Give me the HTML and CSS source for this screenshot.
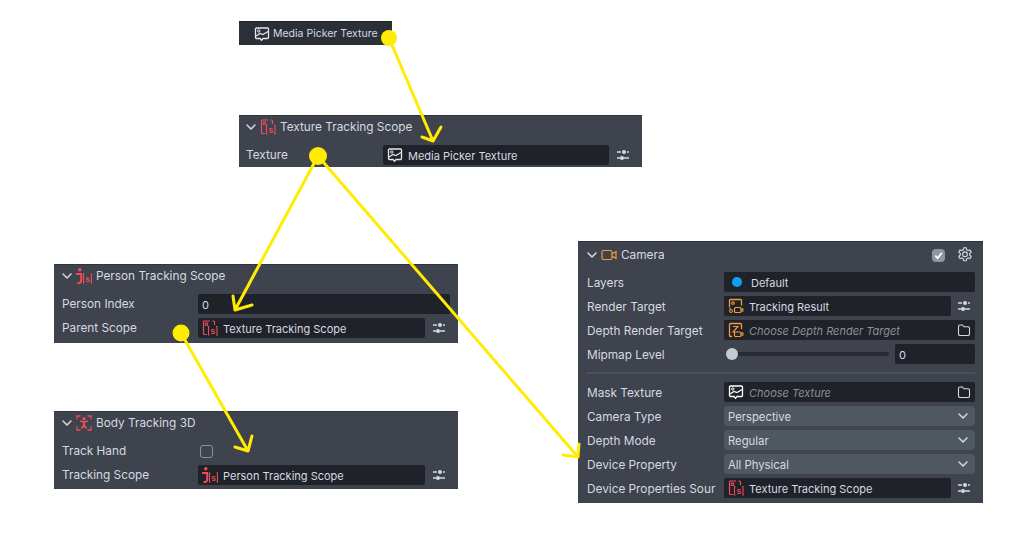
FILE: index.html
```html
<!DOCTYPE html>
<html lang="en">
<head>
  <meta charset="UTF-8">
  <title>Tracking Scope Setup</title>
  <link rel="stylesheet" href="styles.css">
</head>
<body>

  <svg class="defs" width="0" height="0">
    <symbol id="i-chevron" viewBox="0 0 12 12">
      <path d="M2 4l4 4 4-4" fill="none" stroke="currentColor" stroke-width="1.5" stroke-linecap="round" stroke-linejoin="round"/>
    </symbol>
    <symbol id="i-tune" viewBox="0 0 14 12">
      <path d="M1 3h4M11 3h2M1 9h3M8 9h5" stroke="currentColor" stroke-width="1.4" fill="none"/>
      <circle cx="8" cy="3" r="2" fill="currentColor"/>
      <circle cx="6" cy="9" r="2" fill="currentColor"/>
    </symbol>
    <symbol id="i-folder" viewBox="0 0 14 14">
      <path d="M1.500 3.500a1.500 1.500 0 0 1 1.500-1.500h2.500l1.500 1.800h4a1.500 1.500 0 0 1 1.500 1.500v5.700a1.500 1.500 0 0 1-1.500 1.500h-8a1.500 1.500 0 0 1-1.500-1.500z" fill="none" stroke="currentColor" stroke-width="1.100"/>
    </symbol>
    <symbol id="i-picture" viewBox="0 0 16 16">
      <path d="M2.500 2h11a1 1 0 0 1 1 1v8.500a1 1 0 0 1-1 1H9l-1.500 1.800L6 12.500H2.500a1 1 0 0 1-1-1V3a1 1 0 0 1 1-1z" fill="none" stroke="currentColor" stroke-width="1.300"/>
      <circle cx="4.800" cy="5" r="1.200" fill="none" stroke="currentColor"/>
      <path d="M2 10l4-2.500 3 1 5-3" fill="none" stroke="currentColor" stroke-width="1.200"/>
    </symbol>
    <symbol id="i-scope" viewBox="0 0 16 16">
      <path d="M8 1H2.500a1 1 0 0 0-1 1v11.500a1 1 0 0 0 1 1h2.500M10.500 1h1a1 1 0 0 1 1 1v3" fill="none" stroke="currentColor" stroke-width="1.200"/>
      <circle cx="4.500" cy="4.200" r="1.300" fill="none" stroke="currentColor" stroke-width="1.100"/>
      <path d="M7.500 6.500H6.500v8.500h1M14 6.500h1v8.500h-1" fill="none" stroke="currentColor" stroke-width="1.100"/>
      <text x="10.800" y="13.500" class="scope-s">s</text>
    </symbol>
    <symbol id="i-person-scope" viewBox="0 0 16 16">
      <circle cx="3.800" cy="1.800" r="1.700" fill="currentColor"/>
      <path d="M0 6h5.200v6.500c0 1.800-1.300 2.800-3.700 2.500" fill="none" stroke="currentColor" stroke-width="2"/>
      <path d="M8.500 6H7.500v9h1M14.500 6h1v9h-1" fill="none" stroke="currentColor" stroke-width="1.100"/>
      <text x="11.500" y="13.500" class="scope-s">s</text>
    </symbol>
    <symbol id="i-body" viewBox="0 0 16 16">
      <path d="M1 4.500V1h3.500M11.500 1H15v3.500M1 11.500V15h3.500M11.500 15H15v-3.500" fill="none" stroke="currentColor" stroke-width="1.300"/>
      <circle cx="8" cy="3.800" r="1.800" fill="currentColor"/>
      <path d="M4 6l4 1 4-1M8 7v3M8 10l-2.500 3.500M8 10l2.500 3.500" fill="none" stroke="currentColor" stroke-width="1.800"/>
    </symbol>
    <symbol id="i-camera" viewBox="0 0 16 12">
      <rect x="1" y="1.500" width="10" height="9" rx="1.500" fill="none" stroke="currentColor" stroke-width="1.200"/>
      <path d="M11 5l4-2.500v7L11 7" fill="none" stroke="currentColor" stroke-width="1.200"/>
    </symbol>
    <symbol id="i-target" viewBox="0 0 16 16">
      <path d="M1.500 9.500V2.500a1 1 0 0 1 1-1h10a1 1 0 0 1 1 1V7.500M3 11H1.500" fill="none" stroke="currentColor" stroke-width="1.300"/>
      <circle cx="5" cy="5" r="1.300" fill="none" stroke="currentColor" stroke-width="1.100"/>
      <rect x="6.500" y="9.500" width="6.500" height="5" rx="1" fill="none" stroke="currentColor" stroke-width="1.200"/>
      <path d="M13 11.500l2-1v3l-2-1M1.500 13a1.500 1.500 0 0 0 3 0 1.500 1.500 0 0 0-3 0z" fill="none" stroke="currentColor"/>
    </symbol>
    <symbol id="i-depth" viewBox="0 0 16 16">
      <path d="M4 14.500H2.500a1 1 0 0 1-1-1V2.500a1 1 0 0 1 1-1h10a1 1 0 0 1 1 1V7" fill="none" stroke="currentColor" stroke-width="1.300"/>
      <path d="M5 4.500h5L5 10h2" fill="none" stroke="currentColor" stroke-width="1.200"/>
      <rect x="6.500" y="10" width="6.500" height="4.500" rx="1" fill="none" stroke="currentColor" stroke-width="1.200"/>
      <path d="M13 11.500l2-1v3l-2-1" fill="none" stroke="currentColor"/>
    </symbol>
    <symbol id="i-gear" viewBox="0 0 16 16">
      <path d="M6.700 .8h2.600l.4 2 1.300.7 1.900-.6 1.300 2.200-1.500 1.400v1.500l1.500 1.400-1.300 2.200-1.900-.6-1.300.7-.4 2H6.700l-.4-2-1.300-.7-1.900.6-1.300-2.200 1.500-1.400V6.500L1.800 5.100l1.300-2.200 1.900.6 1.300-.7z" fill="none" stroke="currentColor" stroke-width="1.100" stroke-linejoin="round"/>
      <circle cx="8" cy="7.250" r="2.400" fill="none" stroke="currentColor" stroke-width="1.100"/>
    </symbol>
  </svg>

  <main class="canvas">

    <div class="node media-node">
      <svg class="icon"><use href="#i-picture"/></svg>
      <span>Media Picker Texture</span>
    </div>

    <section class="panel texture-panel">
      <header class="panel-head">
        <svg class="chevron"><use href="#i-chevron"/></svg>
        <svg class="icon red"><use href="#i-scope"/></svg>
        <h2>Texture Tracking Scope</h2>
      </header>
      <div class="row">
        <label>Texture</label>
        <div class="field"><svg class="icon"><use href="#i-picture"/></svg><span>Media Picker Texture</span></div>
        <svg class="tune"><use href="#i-tune"/></svg>
      </div>
    </section>

    <section class="panel person-panel">
      <header class="panel-head">
        <svg class="chevron"><use href="#i-chevron"/></svg>
        <svg class="icon red"><use href="#i-person-scope"/></svg>
        <h2>Person Tracking Scope</h2>
      </header>
      <div class="row">
        <label>Person Index</label>
        <div class="field span-2"><span>0</span></div>
      </div>
      <div class="row">
        <label>Parent Scope</label>
        <div class="field"><svg class="icon red"><use href="#i-scope"/></svg><span>Texture Tracking Scope</span></div>
        <svg class="tune"><use href="#i-tune"/></svg>
      </div>
    </section>

    <section class="panel body-panel">
      <header class="panel-head">
        <svg class="chevron"><use href="#i-chevron"/></svg>
        <svg class="icon red"><use href="#i-body"/></svg>
        <h2>Body Tracking 3D</h2>
      </header>
      <div class="row">
        <label>Track Hand</label>
        <div class="checkbox"></div>
      </div>
      <div class="row">
        <label>Tracking Scope</label>
        <div class="field"><svg class="icon red"><use href="#i-person-scope"/></svg><span>Person Tracking Scope</span></div>
        <svg class="tune"><use href="#i-tune"/></svg>
      </div>
    </section>

    <section class="panel camera-panel">
      <header class="panel-head">
        <svg class="chevron"><use href="#i-chevron"/></svg>
        <svg class="icon orange"><use href="#i-camera"/></svg>
        <h2>Camera</h2>
        <div class="head-actions">
          <div class="checked">
            <svg viewBox="0 0 12 12"><path d="M3 6.200l2.200 2.300L9 3.500" fill="none" stroke="#fff" stroke-width="1.600"/></svg>
          </div>
          <svg class="gear"><use href="#i-gear"/></svg>
        </div>
      </header>
      <div class="row">
        <label>Layers</label>
        <div class="field span-2"><i class="layer-dot"></i><span>Default</span></div>
      </div>
      <div class="row">
        <label>Render Target</label>
        <div class="field"><svg class="icon orange"><use href="#i-target"/></svg><span>Tracking Result</span></div>
        <svg class="tune"><use href="#i-tune"/></svg>
      </div>
      <div class="row">
        <label>Depth Render Target</label>
        <div class="field span-2">
          <svg class="icon orange"><use href="#i-depth"/></svg>
          <span class="placeholder">Choose Depth Render Target</span>
          <svg class="folder"><use href="#i-folder"/></svg>
        </div>
      </div>
      <div class="row">
        <label>Mipmap Level</label>
        <div class="slider span-2">
          <div class="track"><i class="thumb"></i></div>
          <div class="field value"><span>0</span></div>
        </div>
      </div>
      <hr class="divider">
      <div class="row">
        <label>Mask Texture</label>
        <div class="field span-2">
          <svg class="icon white"><use href="#i-picture"/></svg>
          <span class="placeholder">Choose Texture</span>
          <svg class="folder"><use href="#i-folder"/></svg>
        </div>
      </div>
      <div class="row">
        <label>Camera Type</label>
        <div class="select span-2"><span>Perspective</span><svg class="select-arrow"><use href="#i-chevron"/></svg></div>
      </div>
      <div class="row">
        <label>Depth Mode</label>
        <div class="select span-2"><span>Regular</span><svg class="select-arrow"><use href="#i-chevron"/></svg></div>
      </div>
      <div class="row">
        <label>Device Property</label>
        <div class="select span-2"><span>All Physical</span><svg class="select-arrow"><use href="#i-chevron"/></svg></div>
      </div>
      <div class="row">
        <label>Device Properties Sour</label>
        <div class="field"><svg class="icon red"><use href="#i-scope"/></svg><span>Texture Tracking Scope</span></div>
        <svg class="tune"><use href="#i-tune"/></svg>
      </div>
    </section>

    <!-- yellow annotations drawn over the panels -->
    <svg class="arrows" viewBox="0 0 1024 533">
      <g fill="none" stroke="#ffec00" stroke-width="3" stroke-linecap="round" stroke-linejoin="round">
        <path d="M389 38L433 141M422 137l11 4 8-14"/>
        <path d="M318 156L235 310M233 296l2 14 17-5"/>
        <path d="M318 156L578 457M563 455l15 2 1-13"/>
        <path d="M181 333L248 451M235 447l13 4 4-15"/>
      </g>
      <g fill="#ffec00">
        <circle cx="389" cy="38" r="8"/>
        <circle cx="318" cy="156" r="9"/>
        <circle cx="181" cy="333" r="8.500"/>
      </g>
    </svg>

  </main>

</body>
</html>
```

FILE: styles.css
```css
:root {
  --panel: #3e434d;
  --field: #1f2228;
  --select: #4f5761;
  --text: #d6dae1;
  --muted: #8a9099;
  --red: #ee4d5a;
  --orange: #f39a3c;
}

body {
  margin: 0;
  background: #fff;
  font-family: Inter, "Noto Sans", sans-serif;
  font-size: 11.800px;
  color: var(--text);
}

.defs {
  display: none;
}

.scope-s {
  font-family: Inter, sans-serif;
  font-size: 8.500px;
  font-weight: 600;
  text-anchor: middle;
  fill: currentColor;
}

.canvas {
  position: relative;
  width: 1024px;
  height: 533px;
  overflow: hidden;
}

.arrows {
  position: absolute;
  left: 0;
  top: 0;
  width: 1024px;
  height: 533px;
}

/* node placement */
.media-node {
  position: absolute;
  left: 239px;
  top: 21px;
  width: 153px;
  height: 24px;
  box-sizing: border-box;
  padding-left: 15px;
  display: flex;
  align-items: center;
  gap: 3px;
  background: #2b2f37;
  border-top: 1px solid #1f2228;
  font-size: 10.500px;
  white-space: nowrap;
}

.panel {
  position: absolute;
  box-sizing: border-box;
  background: var(--panel);
  border-top: 1px solid #30343c;
}

.texture-panel { left: 239px; top: 115px; width: 403px; height: 52px; }
.person-panel { left: 54px; top: 264px; width: 404px; height: 79px; }
.body-panel { left: 54px; top: 411px; width: 404px; height: 78px; }
.camera-panel { left: 578px; top: 241px; width: 405px; height: 262px; padding-top: 1px; }

.panel-head {
  height: 24px;
  margin-top: -1px;
  margin-bottom: 4px;
  padding-left: 7px;
  display: flex;
  align-items: center;
  gap: 3px;
}

.texture-panel .panel-head { padding-left: 6px; }

.camera-panel .panel-head {
  margin-top: 0;
  margin-bottom: 3px;
  padding-left: 8px;
}

.panel-head h2 {
  margin: 0 0 0 1px;
  padding-bottom: 1px;
  font-size: 11.800px;
  font-weight: 400;
}

.camera-panel .panel-head h2 {
  padding-bottom: 0;
}

.chevron {
  width: 12px;
  height: 12px;
  color: var(--text);
}

.icon {
  flex: none;
  width: 16px;
  height: 16px;
  color: #e6e8ec;
}

.icon.red { color: var(--red); }
.icon.orange { color: var(--orange); }
.icon.white { color: #fff; }

.head-actions {
  margin-left: auto;
  margin-right: 10px;
  display: flex;
  align-items: center;
  gap: 12px;
}

.checked {
  width: 13px;
  height: 13px;
  border-radius: 4px;
  background: #8f96a1;
}

.checked svg {
  display: block;
  width: 13px;
  height: 13px;
}

.gear {
  width: 16px;
  height: 16px;
  color: var(--text);
}

.row {
  height: 24px;
  padding: 0 8px;
  display: grid;
  grid-template-columns: 136px 1fr 25px;
  align-items: center;
}

.texture-panel .row {
  padding-left: 7px;
  grid-template-columns: 137px 1fr 25px;
}

.camera-panel .row {
  padding-left: 9px;
  grid-template-columns: 137px 1fr 24px;
}

.row label {
  white-space: nowrap;
}

.camera-panel .row label {
  padding-top: 2px;
}

.span-2 {
  grid-column: 2 / 4;
}

.field {
  height: 20px;
  box-sizing: border-box;
  padding: 0 4px;
  display: flex;
  align-items: center;
  gap: 5px;
  background: var(--field);
  border-radius: 2px;
  min-width: 0;
  font-size: 11px;
  white-space: nowrap;
}

.field span {
  padding-top: 1px;
}

.tune {
  justify-self: end;
  width: 14px;
  height: 12px;
  margin-right: 4px;
  color: var(--text);
}

.folder {
  margin-left: auto;
  width: 14px;
  height: 14px;
  color: var(--text);
}

.placeholder {
  font-style: italic;
  color: var(--muted);
}

.layer-dot {
  width: 10px;
  height: 10px;
  margin: 0 4px 0 4px;
  border-radius: 50%;
  background: #0fa0f0;
}

.checkbox {
  width: 11px;
  height: 11px;
  border: 1px solid #89909b;
  border-radius: 3px;
  margin-left: 2px;
}

.slider {
  display: flex;
  align-items: center;
  gap: 6px;
}

.track {
  position: relative;
  flex: 1;
  height: 4px;
  margin-left: 2px;
  background: #272a30;
  border-radius: 2px;
}

.thumb {
  position: absolute;
  left: 0;
  top: -4px;
  width: 12px;
  height: 12px;
  border-radius: 50%;
  background: #c4cbd4;
}

.field.value {
  width: 80px;
  flex: none;
}

.divider {
  height: 2px;
  margin: 6px 8px;
  border: 0;
  background: #4a4f59;
}

.select {
  height: 20px;
  box-sizing: border-box;
  padding: 0 4px;
  display: flex;
  align-items: center;
  justify-content: space-between;
  background: var(--select);
  border-radius: 4px;
  font-size: 11.300px;
}

.select span {
  padding-top: 1px;
}

.select-arrow {
  width: 12px;
  height: 12px;
  margin-right: 2px;
  color: var(--text);
}
```
